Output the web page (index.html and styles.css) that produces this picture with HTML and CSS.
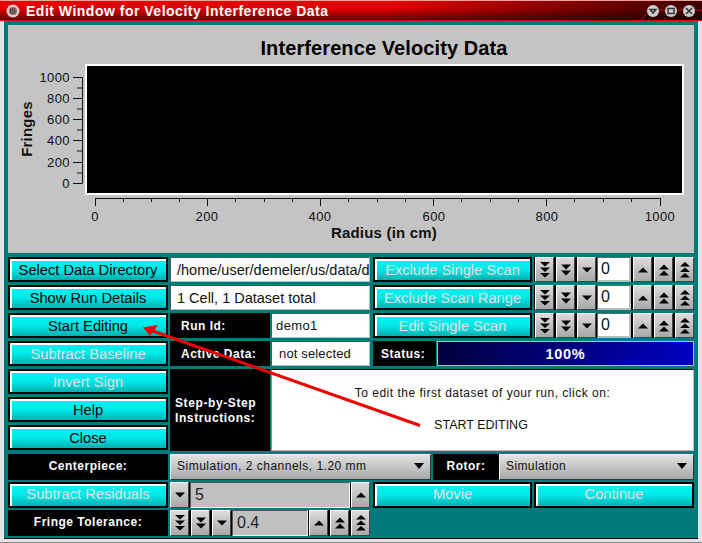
FILE: index.html
```html
<!DOCTYPE html>
<html lang="en">
<head>
<meta charset="utf-8">
<title>Edit Window for Velocity Interference Data</title>
<link rel="stylesheet" href="styles.css">
</head>
<body>
<svg class="defs" width="0" height="0" aria-hidden="true">
  <symbol id="d1" viewBox="0 0 12 18"><path d="M1 6.500h10l-5 5z"/></symbol>
  <symbol id="d2" viewBox="0 0 12 18"><path d="M1 3.500h10l-5 5zM1 9.500h10l-5 5z"/></symbol>
  <symbol id="d3" viewBox="0 0 12 18"><path d="M1 1h10l-5 4.500zM1 6.500h10l-5 4.500zM1 12h10l-5 4.500z"/></symbol>
  <symbol id="u1" viewBox="0 0 12 18"><path d="M1 11.500h10l-5-5z"/></symbol>
  <symbol id="u2" viewBox="0 0 12 18"><path d="M1 8.500h10l-5-5zM1 14.500h10l-5-5z"/></symbol>
  <symbol id="u3" viewBox="0 0 12 18"><path d="M1 5.500h10l-5-4.500zM1 11h10l-5-4.500zM1 16.500h10l-5-4.500z"/></symbol>
</svg>
<div class="window">
  <header class="titlebar">
    <svg class="winicon" viewBox="0 0 14 14" width="14" height="14"><circle cx="7" cy="7" r="6.500" fill="#f0c8c8"/><circle cx="7" cy="7" r="4" fill="#8a6a6a"/><path d="M4 5h6M4 7h6M4 9h6" stroke="#222" stroke-dasharray="1 1"/></svg>
    <span class="titletext">Edit Window for Velocity Interference Data</span>
    <svg class="winbtns" viewBox="640 0 62 21" width="62" height="21">
      <path d="M641 20l9-10h52" fill="none" stroke="#c00000"/>
      <circle cx="653" cy="11" r="6" fill="#ccc"/><path d="M650 9.500h6l-3 3.500z" fill="none" stroke="#333" stroke-width="1.500"/>
      <circle cx="671" cy="11" r="6" fill="#ccc"/><rect x="668" y="8.500" width="6" height="5" fill="none" stroke="#333" stroke-width="1.500"/>
      <circle cx="689" cy="11" r="6" fill="#ccc"/><path d="M686 8l6 6M692 8l-6 6" stroke="#333" stroke-width="1.500"/>
    </svg>
  </header>
  <main class="client">
    <section class="plotpanel">
      <svg class="plot" viewBox="8 25 686 228" width="686" height="228">
        <text class="plot-title" x="384" y="54.500" text-anchor="middle">Interference Velocity Data</text>
        <rect x="86" y="65" width="597" height="129" fill="#000" stroke="#fff" stroke-width="2"/>
        <g stroke="#111" fill="none">
          <path d="M82.500 77v106.500M73 77.500h9M77 88h5M73 98.500h9M77 109h5M73 119.500h9M77 130h5M73 140.500h9M77 151h5M73 162.500h9M77 173h5M73 183.500h9"/>
          <path d="M95 198.500h566M95.500 198v8M123.500 198v4M151.500 198v4M179.500 198v4M207.500 198v8M235.500 198v4M264.500 198v4M292.500 198v4M320.500 198v8M348.500 198v4M377.500 198v4M405.500 198v4M433.500 198v8M461.500 198v4M490.500 198v4M518.500 198v4M546.500 198v8M574.500 198v4M603.500 198v4M631.500 198v4M660.500 198v8"/>
        </g>
        <g class="tick" text-anchor="end">
          <text x="70" y="82">1000</text><text x="70" y="103">800</text><text x="70" y="124">600</text><text x="70" y="145">400</text><text x="70" y="167">200</text><text x="70" y="188">0</text>
        </g>
        <g class="tick" text-anchor="middle">
          <text x="95" y="221">0</text><text x="207" y="221">200</text><text x="320" y="221">400</text><text x="434" y="221">600</text><text x="547" y="221">800</text><text x="660" y="221">1000</text>
        </g>
        <text class="axis" x="384" y="238" text-anchor="middle">Radius (in cm)</text>
        <text class="axis" transform="translate(32 129) rotate(-90)" text-anchor="middle">Fringes</text>
      </svg>
    </section>

    <section class="controls">
      <div class="upper">
        <div class="leftcol">
          <button class="btn">Select Data Directory</button>
          <button class="btn">Show Run Details</button>
          <button class="btn">Start Editing</button>
          <button class="btn off">Subtract Baseline</button>
          <button class="btn off">Invert Sign</button>
          <button class="btn">Help</button>
          <button class="btn">Close</button>
        </div>
        <div class="rightcol">
          <div class="row">
            <div class="field wide">/home/user/demeler/us/data/d</div>
            <button class="btn action off">Exclude Single Scan</button>
            <div class="spinner">
              <button class="spin"><svg><use href="#d3"/></svg></button><button class="spin"><svg><use href="#d2"/></svg></button><button class="spin"><svg><use href="#d1"/></svg></button>
              <div class="field num">0</div>
              <button class="spin"><svg><use href="#u1"/></svg></button><button class="spin"><svg><use href="#u2"/></svg></button><button class="spin"><svg><use href="#u3"/></svg></button>
            </div>
          </div>
          <div class="row">
            <div class="field wide">1 Cell, 1 Dataset total</div>
            <button class="btn action off">Exclude Scan Range</button>
            <div class="spinner">
              <button class="spin"><svg><use href="#d3"/></svg></button><button class="spin"><svg><use href="#d2"/></svg></button><button class="spin"><svg><use href="#d1"/></svg></button>
              <div class="field num">0</div>
              <button class="spin"><svg><use href="#u1"/></svg></button><button class="spin"><svg><use href="#u2"/></svg></button><button class="spin"><svg><use href="#u3"/></svg></button>
            </div>
          </div>
          <div class="row">
            <div class="label mid">Run Id:</div>
            <div class="field small">demo1</div>
            <button class="btn action off">Edit Single Scan</button>
            <div class="spinner">
              <button class="spin"><svg><use href="#d3"/></svg></button><button class="spin"><svg><use href="#d2"/></svg></button><button class="spin"><svg><use href="#d1"/></svg></button>
              <div class="field num">0</div>
              <button class="spin"><svg><use href="#u1"/></svg></button><button class="spin"><svg><use href="#u2"/></svg></button><button class="spin"><svg><use href="#u3"/></svg></button>
            </div>
          </div>
          <div class="row">
            <div class="label mid">Active Data:</div>
            <div class="field small center">not selected</div>
            <div class="label status">Status:</div>
            <div class="progress">100%</div>
          </div>
          <div class="row instr">
            <div class="label mid">Step-by-Step<br>Instructions:</div>
            <div class="instrbox">
              <p class="l1">To edit the first dataset of your run, click on:</p>
              <p class="l2">START EDITING</p>
            </div>
          </div>
        </div>
      </div>
      <div class="row lower first">
        <div class="label left">Centerpiece:</div>
        <div class="select cp"><span>Simulation, 2 channels, 1.20 mm</span><i class="caret"></i></div>
        <div class="label rotor">Rotor:</div>
        <div class="select ro"><span>Simulation</span><i class="caret"></i></div>
      </div>
      <div class="row lower">
        <button class="btn leftbtn off">Subtract Residuals</button>
        <div class="combo">
          <button class="spin"><svg><use href="#d1"/></svg></button>
          <div class="greyfield grow">5</div>
          <button class="spin"><svg><use href="#u1"/></svg></button>
        </div>
        <button class="btn action off">Movie</button>
        <button class="btn cont off">Continue</button>
      </div>
      <div class="row lower">
        <div class="label left">Fringe Tolerance:</div>
        <div class="combo">
          <button class="spin"><svg><use href="#d3"/></svg></button><button class="spin"><svg><use href="#d2"/></svg></button><button class="spin"><svg><use href="#d1"/></svg></button>
          <div class="greyfield grow">0.4</div>
          <button class="spin"><svg><use href="#u1"/></svg></button><button class="spin"><svg><use href="#u2"/></svg></button><button class="spin"><svg><use href="#u3"/></svg></button>
        </div>
      </div>
    </section>
  </main>
  <svg class="arrow" viewBox="0 0 702 543" width="702" height="543" aria-hidden="true">
    <path d="M420 425.500L150 330" stroke="#f00000" stroke-width="3" fill="none"/>
    <path d="M143 327.500L158 325L155 329L150 336z" fill="#f00000"/>
  </svg>
</div>
</body>
</html>
```
FILE: styles.css
```css
* { box-sizing: border-box; }
html, body { margin: 0; padding: 0; }
body { width: 702px; height: 543px; overflow: hidden; background: #e8e8e8; font-family: "Liberation Sans", Arial, sans-serif; }
.defs { position: absolute; }
.window { position: relative; width: 702px; height: 543px; background: #e4e4e4; display: flex; flex-direction: column; border-bottom: 1px solid #888; }

.titlebar { height: 21px; display: flex; align-items: center; padding-left: 6px; gap: 6px; position: relative;
  border-top: 1px solid #f0a0a0; border-bottom: 1px solid #e00000;
  background: linear-gradient(90deg, rgba(0,0,0,0) 0, rgba(0,0,0,0) 55%, rgba(0,0,0,.75) 100%), linear-gradient(180deg, #e80000 0, #e00000 40%, #6a0000 100%); }
.titletext { color: #fff; font-weight: bold; font-size: 14px; letter-spacing: .5px; }
.winicon { flex: none; }
.winbtns { position: absolute; right: 0; top: -1px; }

.client { margin: 0 4px; width: 694px; height: 518px; background: #007a7a; padding: 4px 4px 0; border-bottom: 1px solid #000; display: flex; flex-direction: column; }
.plotpanel { height: 228px; background: #c4c4c4; flex: none; }
.plot { display: block; }
.plot-title { font: bold 20px "Liberation Sans", Arial, sans-serif; fill: #000; letter-spacing: .1px; }
.tick text { font: 13px "Liberation Sans", Arial, sans-serif; fill: #111; letter-spacing: .4px; }
.axis { font: bold 15px "Liberation Sans", Arial, sans-serif; fill: #111; letter-spacing: .2px; }

.controls { margin-top: 4px; display: flex; flex-direction: column; }
.upper { display: flex; gap: 2px; }
.leftcol { width: 160px; display: flex; flex-direction: column; gap: 3px; }
.rightcol { width: 524px; display: flex; flex-direction: column; gap: 3px; }
.row { display: flex; height: 25px; }
.row.instr { height: 82px; gap: 1px; }
.lower { height: 26px; margin-top: 2px; gap: 2px; }
.lower.first { margin-top: 3px; }

.btn { height: 25px; width: 160px; padding: 0; border: 2px solid #000; font: 14.700px "Liberation Sans", Arial, sans-serif; color: #000;
  background: linear-gradient(180deg, #00f4f4 0, #00e8e8 50%, #00b0b0 100%);
  box-shadow: inset 2px 2px 0 #fff; flex: none; }
.btn.off { color: #e2e2e2; }
.btn.action { width: 159px; margin-left: 3px; }
.btn.cont { width: 160px; }
.lower .btn { height: 26px; padding-bottom: 2px; }
.lower .btn.action { margin-left: 1px; }
.leftbtn { width: 160px; }

.label { background: #000; color: #fff; font-weight: bold; font-size: 12px; letter-spacing: .5px; display: flex; align-items: center; flex: none; }
.lower .label { padding-bottom: 2px; }
.label.mid { width: 100px; padding-left: 11px; }
.row:not(.instr) > .label.mid { margin-right: 1px; }
.row.instr .label.mid { padding-left: 5px; display: block; padding-top: 27px; line-height: 15px; letter-spacing: .6px; }
.label.status { width: 63px; margin-left: 3px; padding-left: 8px; }
.label.left { width: 160px; justify-content: center; }
.label.rotor { width: 66px; justify-content: center; margin-left: 0; }

.field { background: #fff; color: #111; font-size: 14.500px; white-space: nowrap; overflow: hidden; display: flex; align-items: center; border: 1px solid; border-color: #555 #bbb #bbb #555; flex: none; }
.field.wide { width: 200px; padding-left: 6px; }
.field.small { width: 99px; padding-left: 4px; font-size: 13px; letter-spacing: .4px; }
.field.small.center { padding-left: 7px; letter-spacing: .15px; }
.field.num { width: 34px; padding-left: 3px; font-size: 16px; border-color: #666 #bbb #bbb #666; border-width: 1px 2px 2px 1px; }

.spinner { display: flex; margin-left: 2px; width: 160px; background: #000; padding-left: 1px; }
.spin { width: 19px; padding: 0; flex: none; height: 100%; display: flex; align-items: center; justify-content: center; border: 1px solid; border-color: #fff #444 #444 #fff; background: linear-gradient(180deg, #dcdcdc 0, #a8a8a8 100%); margin-right: 2px; }
.spin:last-child { margin-right: 0; }
.spin svg { width: 12px; height: 18px; fill: #000; }
.spinner .field.num { margin-right: 2px; margin-left: -1px; }

.progress { width: 257px; margin-left: 1px; color: #fff; font-weight: bold; font-size: 14.500px; letter-spacing: .7px; display: flex; align-items: center; justify-content: center; border: 1px solid #bbb; background: linear-gradient(90deg, #000040 0, #0000c0 100%); }

.instrbox { width: 423px; background: #fff; color: #111; border: 1px solid; border-color: #000 #bbb #bbb #888; font-size: 12px; text-align: center; position: relative; display: flex; flex-direction: column; }
.instrbox p { margin: 0; }
.instrbox .l1 { padding-top: 16px; line-height: 15px; letter-spacing: .5px; }
.instrbox .l2 { padding-top: 17px; line-height: 15px; font-size: 12.500px; padding-right: 3px; }

.select { height: 26px; display: flex; align-items: center; justify-content: space-between; padding: 0 6px 2px; background: linear-gradient(180deg, #e2e2e2 0, #a8a8a8 100%); border: 1px solid; border-color: #eee #333 #333 #eee; color: #111; font-size: 12px; letter-spacing: .5px; flex: none; }
.select.cp { width: 261px; }
.select.ro { width: 195px; margin-left: -2px; letter-spacing: .4px; }
.caret { display: block; width: 0; height: 0; border-left: 5px solid transparent; border-right: 5px solid transparent; border-top: 6px solid #000; }

.combo { display: flex; width: 200px; flex: none; background: #000; }
.greyfield { background: #c0c0c0; color: #222; font-size: 16px; display: flex; align-items: center; padding-left: 4px; border: 1px solid; border-color: #555 #eee #eee #555; margin-right: 0; }
.grow { flex: 1; min-width: 0; }
.combo .spin { margin-right: 2px; }
.combo .spin:last-child { margin-right: 0; }
.combo .greyfield { margin-right: 1px; margin-left: -1px; }

.arrow { position: absolute; left: 0; top: 0; pointer-events: none; }
```
